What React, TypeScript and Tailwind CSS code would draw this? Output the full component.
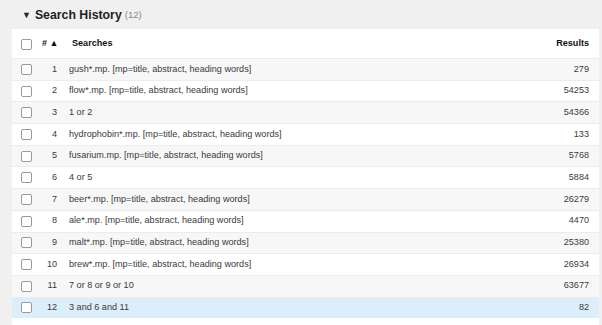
const rows: [number, string, number][] = [
  [1, 'gush*.mp. [mp=title, abstract, heading words]', 279],
  [2, 'flow*.mp. [mp=title, abstract, heading words]', 54253],
  [3, '1 or 2', 54366],
  [4, 'hydrophobin*.mp. [mp=title, abstract, heading words]', 133],
  [5, 'fusarium.mp. [mp=title, abstract, heading words]', 5768],
  [6, '4 or 5', 5884],
  [7, 'beer*.mp. [mp=title, abstract, heading words]', 26279],
  [8, 'ale*.mp. [mp=title, abstract, heading words]', 4470],
  [9, 'malt*.mp. [mp=title, abstract, heading words]', 25380],
  [10, 'brew*.mp. [mp=title, abstract, heading words]', 26934],
  [11, '7 or 8 or 9 or 10', 63677],
  [12, '3 and 6 and 11', 82],
];

function Box() {
  return <span className="block h-[11px] w-[11px] rounded-[2px] border border-[#9a9a9a] bg-white" />;
}

export default function App() {
  return (
    <div className="h-[325px] w-[602px] overflow-hidden bg-[#f0f0f0] font-['Liberation_Sans',Arial,sans-serif] text-[#3a3a3a]">
      <div className="flex h-[29px] items-center pl-[22px] pt-[2px] text-[12.3px]">
        <span className="mr-[4px] text-[9px] text-[#222]">▼</span>
        <span className="font-bold text-[#222]">Search History</span>
        <span className="ml-[3px] text-[9.5px] text-[#888]">(12)</span>
      </div>
      <div className="ml-[12px] mr-[3px] bg-white pb-[10px] text-[9.1px]">
        <div className="flex h-[29px] items-center pt-[1px] font-bold text-[#111]">
          <div className="w-[30px] pl-[9px]"><Box /></div>
          <div className="w-[16px] text-right text-[9px]">#&nbsp;▲</div>
          <div className="flex-1 pl-[14px]">Searches</div>
          <div className="pr-[10px]">Results</div>
        </div>
        {rows.map(([n, q, r]) => (
          <div
            key={n}
            className={
              'flex h-[21.7px] items-center border-t border-[#ececec] ' +
              (n === 12 ? 'bg-[#ddeefb]' : n % 2 === 1 ? 'bg-[#f7f7f7]' : 'bg-white')
            }
          >
            <div className="w-[30px] pl-[9px]"><Box /></div>
            <div className="w-[15px] text-right">{n}</div>
            <div className="flex-1 pl-[12px]">{q}</div>
            <div className="pr-[10px]">{r}</div>
          </div>
        ))}
      </div>
    </div>
  );
}
